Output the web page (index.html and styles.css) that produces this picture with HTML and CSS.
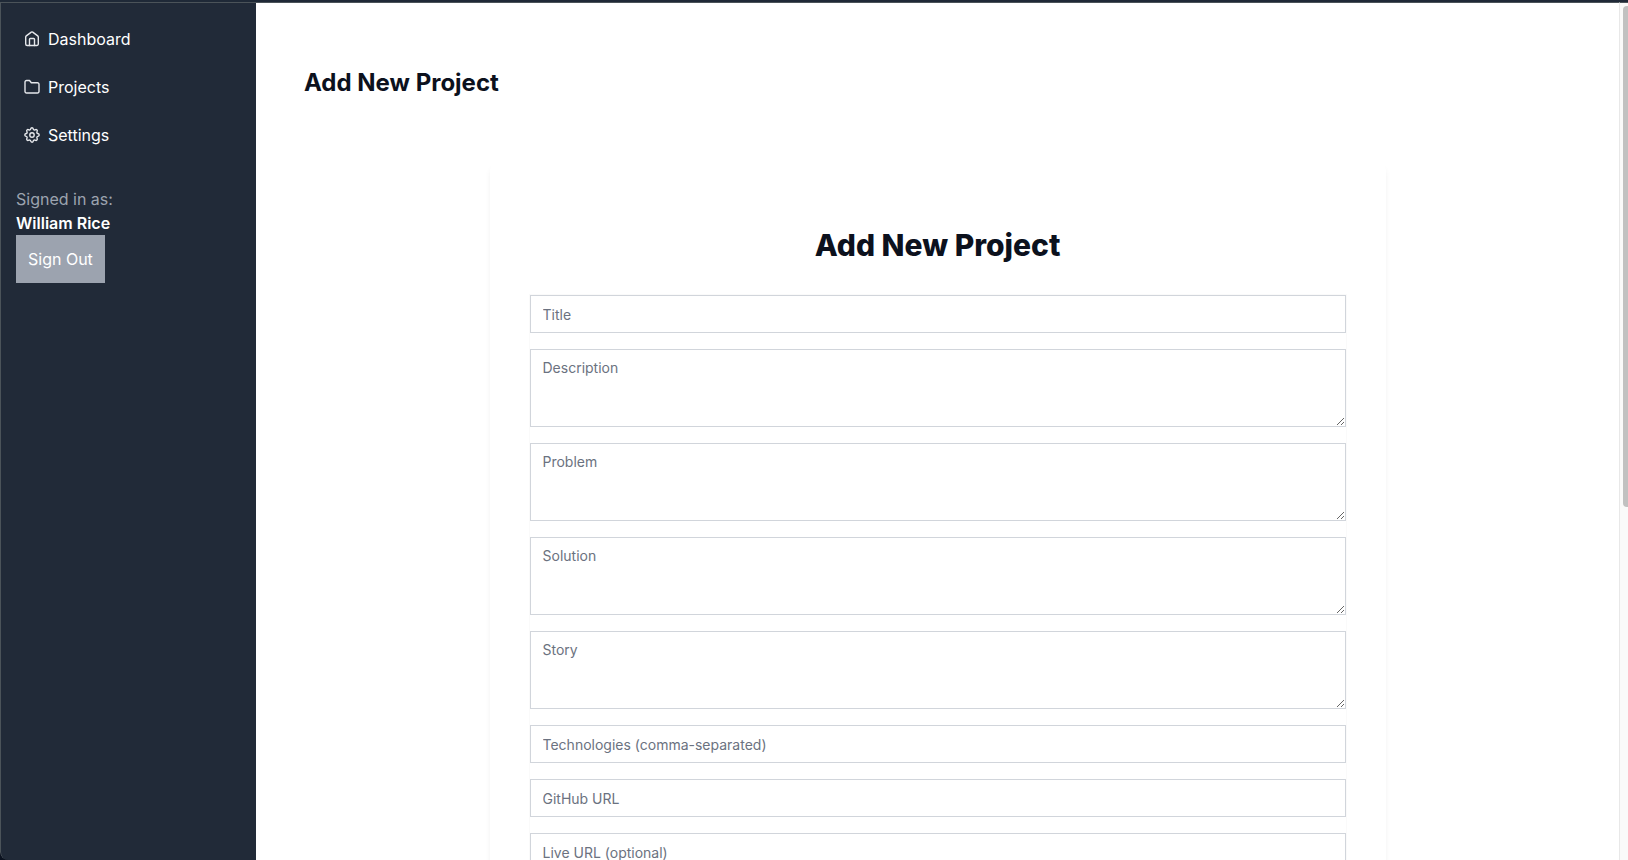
FILE: index.html
```
<!DOCTYPE html>
<html lang="en">
<head>
<meta charset="utf-8">
<meta name="viewport" content="width=device-width, initial-scale=1">
<title>Add New Project</title>
<link rel="stylesheet" href="styles.css">
</head>
<body>
<div class="window">
  <aside class="sidebar">
    <nav class="nav">
      <a class="nav-link" href="#">
        <svg class="icon" viewBox="0 0 16 16" aria-hidden="true"><path d="M1.700 6a1.500 1.500 0 0 1 .6-1.100L7.300 1.100a1.200 1.200 0 0 1 1.400 0l5 3.800a1.500 1.500 0 0 1 .6 1.100v7a1.500 1.500 0 0 1-1.500 1.500H3.200A1.500 1.500 0 0 1 1.700 13z"/><path d="M5.500 14.500V8.300a.8.8 0 0 1 .8-.8h3.400a.8.8 0 0 1 .8.8v6.200"/></svg>
        Dashboard
      </a>
      <a class="nav-link" href="#">
        <svg class="icon" viewBox="0 0 16 16" aria-hidden="true"><path d="M1 3a1.500 1.500 0 0 1 1.500-1.500h3L7.300 3.800h6.200A1.500 1.500 0 0 1 15 5.300v7.200a1.500 1.500 0 0 1-1.500 1.500h-11A1.500 1.500 0 0 1 1 12.500z"/></svg>
        Projects
      </a>
      <a class="nav-link" href="#">
        <svg class="icon" viewBox="0 0 16 16" aria-hidden="true"><circle cx="8" cy="8" r="2.200"/><path d="M8 .8c1.100 0 1.100.5 1.300 1.300.2.800 1 1.100 1.700.7.700-.4 1.200-.7 1.900.1.800.7.500 1.200.1 1.900-.4.700 0 1.500.8 1.700.8.200 1.400.4 1.400 1.500s-.6 1.200-1.400 1.400c-.8.200-1.200 1-.8 1.700.4.700.7 1.200-.1 1.900-.7.800-1.200.5-1.900.1-.7-.4-1.500 0-1.700.8-.2.800-.2 1.300-1.300 1.300s-1.200-.5-1.400-1.300c-.2-.8-1-1.200-1.700-.8-.7.4-1.200.7-1.900-.1-.7-.7-.4-1.200 0-1.900s0-1.500-.8-1.700C1.400 9.200.8 9.100.8 8s.6-1.300 1.400-1.500c.8-.2 1.200-1 .8-1.700s-.7-1.200 0-1.900c.7-.8 1.200-.5 1.900-.1.700.4 1.500.1 1.700-.7C6.800 1.300 6.900.8 8 .8z"/></svg>
        Settings
      </a>
    </nav>
    <div class="account">
      <span class="account-label">Signed in as:</span>
      <strong class="account-name">William Rice</strong>
      <button class="sign-out" type="button">Sign Out</button>
    </div>
  </aside>
  <main class="main">
    <h1 class="page-title">Add New Project</h1>
    <section class="card">
      <h2 class="card-title">Add New Project</h2>
      <form class="form">
        <input class="field" type="text" placeholder="Title" aria-label="Title">
        <textarea class="field area" placeholder="Description" aria-label="Description"></textarea>
        <textarea class="field area" placeholder="Problem" aria-label="Problem"></textarea>
        <textarea class="field area" placeholder="Solution" aria-label="Solution"></textarea>
        <textarea class="field area" placeholder="Story" aria-label="Story"></textarea>
        <input class="field" type="text" placeholder="Technologies (comma-separated)" aria-label="Technologies (comma-separated)">
        <input class="field" type="text" placeholder="GitHub URL" aria-label="GitHub URL">
        <input class="field" type="text" placeholder="Live URL (optional)" aria-label="Live URL (optional)">
      </form>
    </section>
  </main>
  <div class="scroll-track" aria-hidden="true"><div class="scroll-thumb"></div></div>
</div>
</body>
</html>
```
FILE: styles.css
```
* {
  box-sizing: border-box;
}

body {
  margin: 0;
  background: #0b1220;
  color: #0c111d;
  font: 400 16px/24px Inter, sans-serif;
}

.window {
  display: flex;
  height: 100vh;
  border-top: 2px solid #1f2937;
  border-bottom-left-radius: 8px;
  overflow: hidden;
}

.sidebar {
  flex: 0 0 256px;
  display: flex;
  flex-direction: column;
  gap: 28px;
  padding-top: 12px;
  background: #212a38;
  border-top: 1px solid #4b5359;
  border-left: 1px solid #4b5359;
  border-bottom-left-radius: 8px;
  color: #fff;
}

.nav {
  display: flex;
  flex-direction: column;
}

.nav-link {
  display: flex;
  align-items: center;
  gap: 8px;
  padding: 12px 23px;
  color: inherit;
  text-decoration: none;
}

.icon {
  width: 16px;
  height: 16px;
  fill: none;
  stroke: #e5e7eb;
  stroke-width: 1.4;
  stroke-linecap: round;
  stroke-linejoin: round;
}

.account {
  display: flex;
  flex-direction: column;
  align-items: flex-start;
  padding: 0 15px;
}

.account-label {
  color: #9ca3af;
}

.account-name {
  font-weight: 600;
}

.sign-out {
  padding: 12px;
  border: 0;
  background: #9ca3af;
  color: #fff;
  font: inherit;
}

.main {
  flex: 1;
  min-width: 0;
  padding: 64px 48px;
  overflow: hidden;
  background: #fff;
  border-top: 1px solid #4b5359;
}

.page-title {
  margin: 0 0 64px;
  font-size: 24px;
  line-height: 32px;
  font-weight: 700;
}

.card {
  max-width: 896px;
  margin: 0 auto;
  padding: 64px 40px;
  border-radius: 8px;
  box-shadow: 0 4px 6px -1px rgba(0, 0, 0, 0.08);
}

.card-title {
  margin: 0 0 32px;
  font-size: 30px;
  line-height: 36px;
  font-weight: 800;
  text-align: center;
}

.form {
  display: flex;
  flex-direction: column;
  gap: 16px;
  box-shadow: 0 0 0 1px #fafafa;
}

.field {
  display: block;
  width: 100%;
  height: 38px;
  margin: 0;
  padding: 8px 12px;
  border: 1px solid #d1d5db;
  border-radius: 0;
  outline: 0;
  background: #fff;
  color: inherit;
  font: 400 14px/20px Inter, sans-serif;
}

.field::placeholder {
  color: #6b7280;
}

.area {
  height: 78px;
  resize: vertical;
}

.scroll-track {
  flex: 0 0 9px;
  padding: 3px 0 0 3px;
  background: #fafafa;
  border-top: 1px solid #4b5359;
  border-left: 1px solid #e8e8e8;
}

.scroll-thumb {
  height: 58.7%;
  background: #c1c1c1;
  border-radius: 4px 0 0 4px;
}
```
